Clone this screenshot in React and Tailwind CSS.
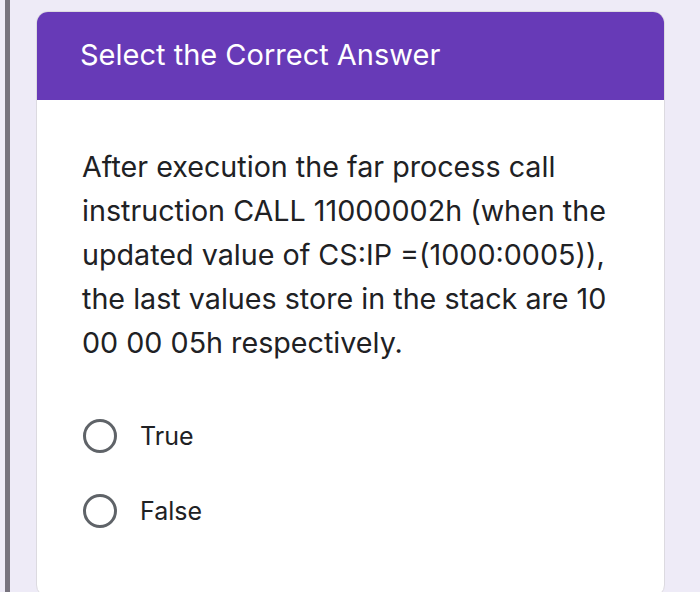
export default function App() {
  const lines = [
    'After execution the far process call',
    'instruction CALL 11000002h (when the',
    'updated value of CS:IP =(1000:0005)),',
    'the last values store in the stack are 10',
    '00 00 05h respectively.',
  ];
  const options = ['True', 'False'];

  return (
    <div className="w-[700px] h-[592px] overflow-hidden bg-[#eeebf7] flex font-['Inter',sans-serif]">
      <div className="ml-[5px] w-[5px] h-full bg-[#77737e]" />
      <div className="ml-[26px] mt-[11px] w-[629px] h-[586px] flex flex-col rounded-[12px] overflow-hidden bg-white border border-[#dcdae0]">
        <div className="h-[89px] bg-[#673ab7] pl-[44px] pt-[26px] -mx-px -mt-px">
          <h1 className="text-[29px] leading-[36px] text-white font-normal">Select the Correct Answer</h1>
        </div>
        <div className="flex-1 pl-[45px] pt-[45px]">
          <p className="text-[28.7px] leading-[44px] text-[#202124]">
            {lines.map((l) => (
              <span key={l} className="block whitespace-nowrap">{l}</span>
            ))}
          </p>
          <div className="mt-[54px] flex flex-col gap-[41px]">
            {options.map((o) => (
              <label key={o} className="flex items-center">
                <span className="ml-px w-[34px] h-[34px] rounded-full border-[3px] border-[#5f6368]" />
                <span className="ml-[23px] text-[25px] leading-[34px] text-[#202124]">{o}</span>
              </label>
            ))}
          </div>
        </div>
      </div>
    </div>
  );
}
